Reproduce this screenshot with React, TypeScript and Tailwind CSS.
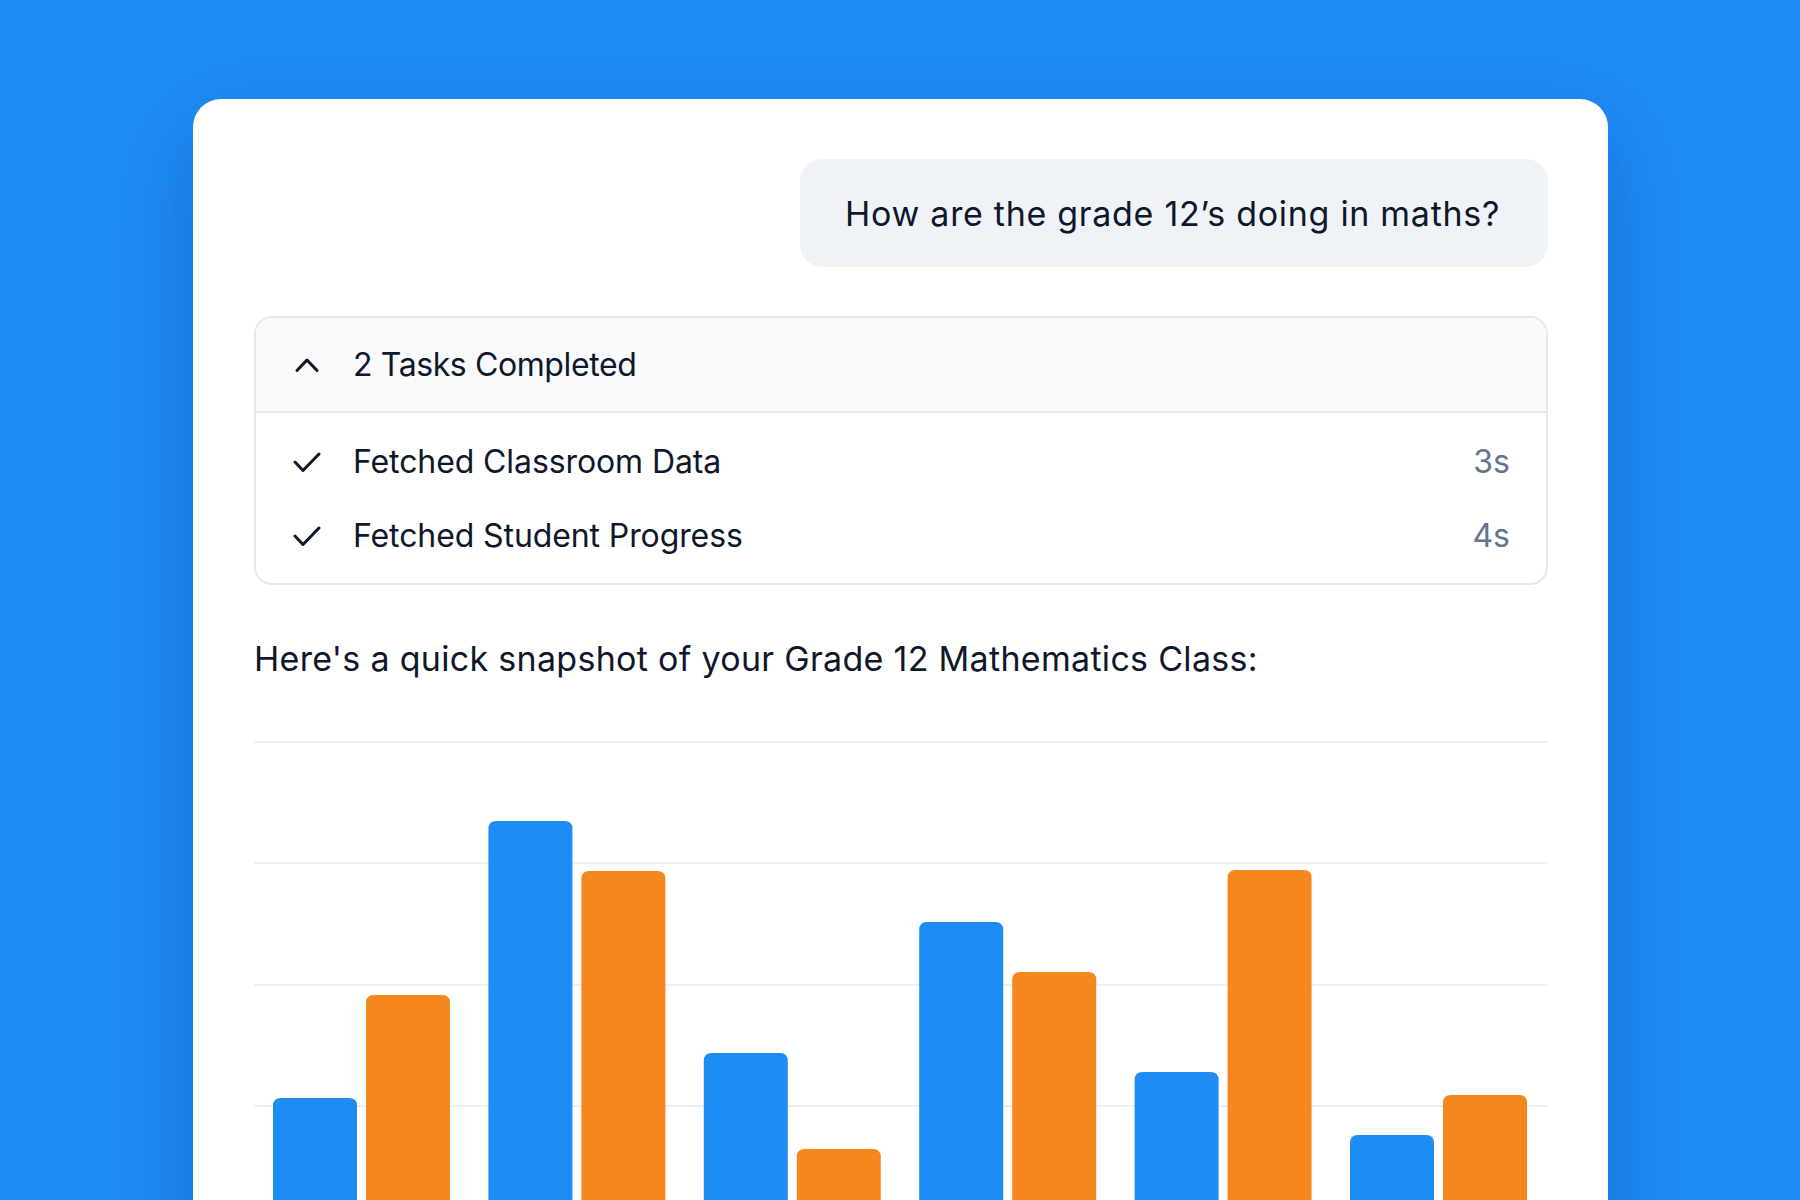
import React from 'react';

const bars = [
  { blue: 357, orange: 254 },
  { blue: 80, orange: 130 },
  { blue: 312, orange: 408 },
  { blue: 181, orange: 231 },
  { blue: 331, orange: 129 },
  { blue: 394, orange: 354 },
];

const CHART_W = 1294;
const CHART_H = 487;

function barPath(x: number, top: number, w: number, r: number) {
  return `M${x} ${CHART_H} L${x} ${top + r} Q${x} ${top} ${x + r} ${top} L${x + w - r} ${top} Q${x + w} ${top} ${x + w} ${top + r} L${x + w} ${CHART_H} Z`;
}

function Chart() {
  const grid = [1, 122, 244, 365, 486];
  return (
    <svg width={CHART_W} height={CHART_H} viewBox={`0 0 ${CHART_W} ${CHART_H}`} className="block">
      {grid.map((y) => (
        <line key={y} x1={0} x2={CHART_W} y1={y} y2={y} stroke="#edf1f5" strokeWidth={2} />
      ))}
      {bars.map((b, i) => {
        const x = 19 + i * 215.4;
        return (
          <g key={i}>
            <path d={barPath(x, b.blue, 84, 8)} fill="#1e8cf5" />
            <path d={barPath(x + 93, b.orange, 84, 8)} fill="#f5871f" />
          </g>
        );
      })}
    </svg>
  );
}

function CheckIcon() {
  return (
    <svg width="28" height="22" viewBox="0 0 28 22" fill="none">
      <path d="M2 11 L10 19.5 L26 3" stroke="#0f172a" strokeWidth="3" strokeLinecap="round" strokeLinejoin="round" />
    </svg>
  );
}

function ChevronUpIcon() {
  return (
    <svg width="28" height="16" viewBox="0 0 28 16" fill="none">
      <path d="M4 13.5 L14 3 L24 13.5" stroke="#0f172a" strokeWidth="3" strokeLinecap="round" strokeLinejoin="round" />
    </svg>
  );
}

const tasks = [
  { label: 'Fetched Classroom Data', time: '3s' },
  { label: 'Fetched Student Progress', time: '4s' },
];

export default function App() {
  return (
    <div
      className="h-[1200px] overflow-hidden bg-[#1f8cf7] pt-[99px] pl-[193px] pr-[192px] text-[#0f172a]"
      style={{ fontFamily: 'Inter, "Noto Sans", sans-serif' }}
    >
      {/* Card */}
      <div className="h-[1200px] rounded-t-[28px] bg-white pl-[61px] pr-[60px] pt-[60px] shadow-[0_30px_90px_rgba(0,40,110,0.28)]">
        {/* User message */}
        <div className="flex justify-end">
          <div className="flex h-[108px] items-center rounded-[22px] bg-[#eff3f8] pl-[45px] pr-[48px] text-[34px] tracking-[0.7px]">
            How are the grade 12’s doing in maths?
          </div>
        </div>

        {/* Tasks */}
        <div className="mt-[49px] overflow-hidden rounded-[18px] border-2 border-[#e4e9ef]">
          <div className="flex h-[95px] items-center gap-[32px] border-b-2 border-[#e4e9ef] bg-[#f8fafc] pl-[37px] pr-[36px]">
            <ChevronUpIcon />
            <span className="text-[32px] tracking-[-0.4px]">2 Tasks Completed</span>
          </div>
          <div className="flex flex-col pt-[12px] pb-[10px]">
            {tasks.map((t) => (
              <div key={t.label} className="flex h-[74px] items-center pl-[37px] pr-[36px]">
                <CheckIcon />
                <span className="ml-[32px] flex-1 text-[32px] tracking-[-0.1px]">{t.label}</span>
                <span className="text-[32px] text-[#64748b]">{t.time}</span>
              </div>
            ))}
          </div>
        </div>

        {/* Reply */}
        <div className="mt-[54px] h-[40px] text-[34px] leading-[40px] tracking-[0.3px]">
          Here's a quick snapshot of your Grade 12 Mathematics Class:
        </div>

        <div className="mt-[62px]">
          <Chart />
        </div>
      </div>
    </div>
  );
}
